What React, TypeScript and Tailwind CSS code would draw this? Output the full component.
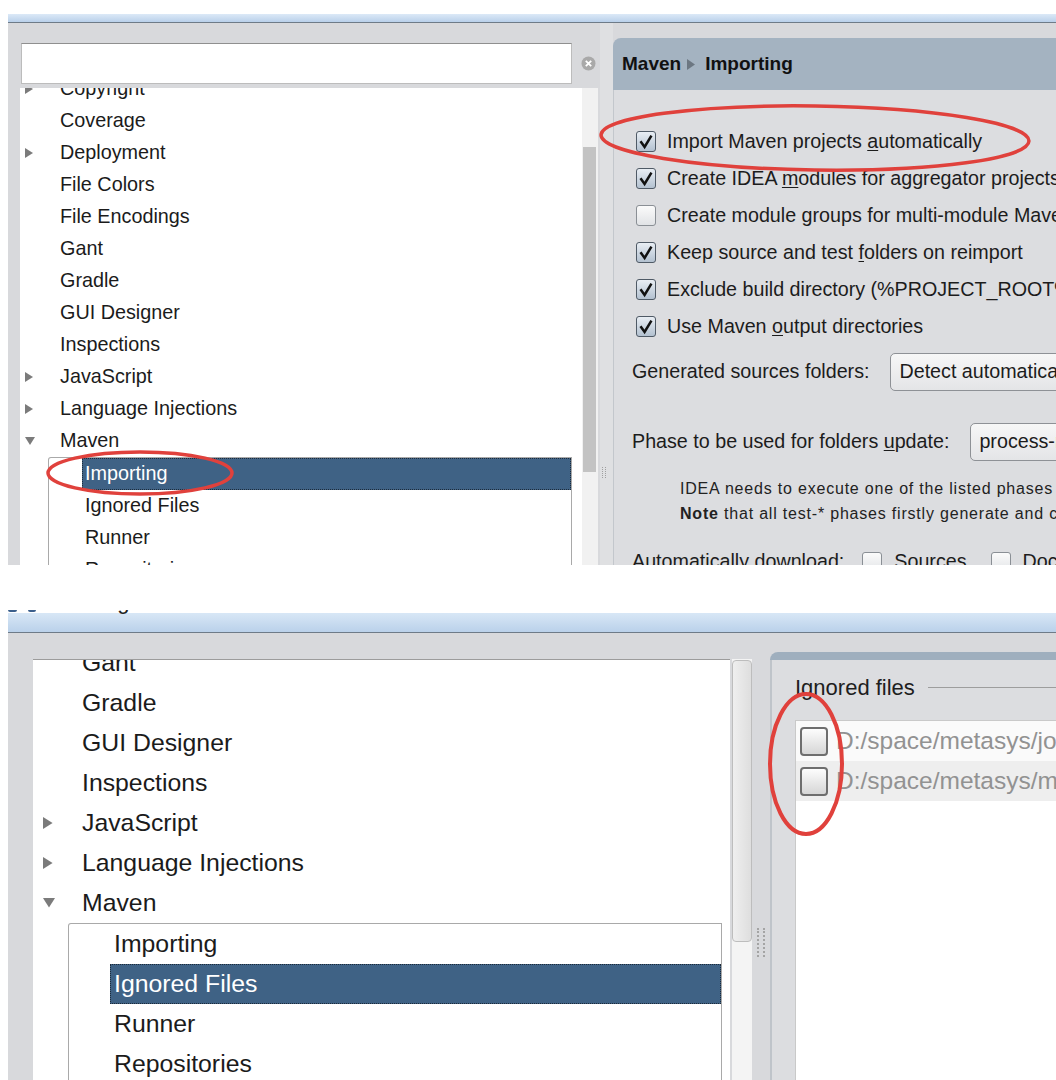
import React from "react";

function ArrowRight({ s = 1 }: { s?: number }) {
  return (
    <svg width={8 * s} height={10 * s} viewBox="0 0 8 10">
      <path d="M0 0 L8 5 L0 10 Z" fill="#7b7b7b" />
    </svg>
  );
}
function ArrowDown({ s = 1 }: { s?: number }) {
  return (
    <svg width={10 * s} height={8 * s} viewBox="0 0 10 8">
      <path d="M0 0 H10 L5 8 Z" fill="#7b7b7b" />
    </svg>
  );
}

function ClearIcon() {
  return (
    <svg width="15" height="15" viewBox="0 0 15 15">
      <circle cx="7.5" cy="7.5" r="7" fill="#a9a9a9" />
      <path d="M4.8 4.8 L10.2 10.2 M10.2 4.8 L4.8 10.2" stroke="#fff" strokeWidth="1.8" />
    </svg>
  );
}

function Check({ checked }: { checked: boolean }) {
  return checked ? (
    <div className="w-[20px] h-[21px] shrink-0 rounded-[3px] border border-[#4f5a66] bg-gradient-to-b from-[#e9eef4] to-[#b3c1d0] flex items-center justify-center">
      <svg width="16" height="16" viewBox="0 0 16 16">
        <path d="M3.2 8.2 L6.6 13 L12.8 2.6" fill="none" stroke="#111" strokeWidth="2.5" strokeLinecap="square" />
      </svg>
    </div>
  ) : (
    <div className="w-[20px] h-[21px] shrink-0 rounded-[3px] border border-[#8a8f95] bg-gradient-to-b from-[#fbfbfb] to-[#e1e3e6]" />
  );
}

function BigBox() {
  return (
    <div className="w-[28px] h-[29px] shrink-0 rounded-[4px] border-2 border-[#6e6e6e] bg-gradient-to-b from-[#fdfdfd] to-[#d6d6d6]" />
  );
}

type Item = { label: string; arrow?: "r" | "d" };

const topItems: Item[] = [
  { label: "Copyright", arrow: "r" },
  { label: "Coverage" },
  { label: "Deployment", arrow: "r" },
  { label: "File Colors" },
  { label: "File Encodings" },
  { label: "Gant" },
  { label: "Gradle" },
  { label: "GUI Designer" },
  { label: "Inspections" },
  { label: "JavaScript", arrow: "r" },
  { label: "Language Injections", arrow: "r" },
  { label: "Maven", arrow: "d" },
];

const bottomItems: Item[] = [
  { label: "Gant" },
  { label: "Gradle" },
  { label: "GUI Designer" },
  { label: "Inspections" },
  { label: "JavaScript", arrow: "r" },
  { label: "Language Injections", arrow: "r" },
  { label: "Maven", arrow: "d" },
];

const children = ["Importing", "Ignored Files", "Runner", "Repositories"];

function TopShot() {
  const rows: { label: React.ReactNode; checked: boolean }[] = [
    { label: <>Import Maven projects <u className="underline-offset-2">a</u>utomatically</>, checked: true },
    { label: <>Create IDEA <u className="underline-offset-2">m</u>odules for aggregator projects (with 'pom' packaging)</>, checked: true },
    { label: <>Create module <u className="underline-offset-2">g</u>roups for multi-module Maven projects</>, checked: false },
    { label: <>Keep source and test <u className="underline-offset-2">f</u>olders on reimport</>, checked: true },
    { label: <>Exclude build directory (%PROJECT_ROOT%/target)</>, checked: true },
    { label: <>Use Maven <u className="underline-offset-2">o</u>utput directories</>, checked: true },
  ];
  return (
    <div className="h-[565px] flex flex-col overflow-hidden">
      <div className="h-[14px] shrink-0" />
      <div className="ml-[8px] h-[8px] shrink-0 bg-gradient-to-b from-[#dce9f7] to-[#b9d0ea]" />
      <div className="ml-[8px] h-[1px] shrink-0 bg-[#6e7b88]" />
      <div className="ml-[8px] flex-1 flex min-h-0 bg-[#d8d9dc]">
        {/* left column */}
        <div className="w-[592px] shrink-0 flex flex-col pl-[12px] pt-[20px] min-h-0">
          <div className="flex items-center h-[41px] shrink-0">
            <div className="ml-[1px] w-[551px] h-[41px] bg-white border border-[#bcbcbc] border-t-[#8f8f8f]" />
            <div className="ml-[9px] flex">
              <ClearIcon />
            </div>
          </div>
          <div className="mt-[4px] flex flex-1 min-h-0">
            <div className="w-[562px] bg-white overflow-hidden">
              <div className="mt-[-15px] text-[19.8px] text-[#1b1b1b]">
                {topItems.map((it) => (
                  <div key={it.label} className="h-[32px] flex items-center whitespace-nowrap">
                    <div className="w-[40px] pl-[5px] flex items-center">
                      {it.arrow === "r" && <ArrowRight />}
                      {it.arrow === "d" && <ArrowDown />}
                    </div>
                    <span>{it.label}</span>
                  </div>
                ))}
                <div className="ml-[28px] mr-[10px] border-l border-t border-r border-[#a9a9a9] rounded-tl-[3px]">
                  {children.map((c, i) => (
                    <div
                      key={c}
                      className={
                        i === 0
                          ? "h-[32px] ml-[33px] flex items-center pl-[2px] bg-[#3f6285] border border-dotted border-[#1d2b3a] text-white"
                          : "h-[32px] ml-[33px] flex items-center pl-[3px]"
                      }
                    >
                      {c}
                    </div>
                  ))}
                </div>
              </div>
            </div>
            <div className="w-[16px] bg-[#f1f1f1] pt-[59px]">
              <div className="ml-[1px] w-[13px] h-[325px] bg-[#c3c3c3]" />
            </div>
          </div>
        </div>
        {/* splitter */}
        <div className="w-[13px] shrink-0 bg-[#dfe0e2] pt-[444px] pl-[2px]">
          <div className="w-[4px] h-[11px] border-l border-r border-dotted border-[#a0a0a0]" />
        </div>
        {/* right panel */}
        <div className="flex-1 min-w-0 pt-[15px] flex flex-col">
          <div className="h-[52px] shrink-0 rounded-tl-[8px] bg-[#a4b3c1] flex items-center pl-[9px] font-bold text-[19px] text-[#111] whitespace-nowrap">
            <span>Maven</span>
            <span className="mx-[6px] flex items-center">
              <svg width="8" height="11" viewBox="0 0 8 11">
                <path d="M0 0 L8 5.5 L0 11 Z" fill="#6c7782" />
              </svg>
            </span>
            <span className="ml-[4px]">Importing</span>
          </div>
          <div className="flex-1 bg-[#dcdde0] border-l border-[#c3c7cc] pt-[33px] whitespace-nowrap text-[19.7px] text-[#1c1c1c] overflow-hidden">
            {rows.map((r, i) => (
              <div key={i} className="h-[37px] flex items-center pl-[22px]">
                <Check checked={r.checked} />
                <span className="ml-[11px]">{r.label}</span>
              </div>
            ))}
            <div className="mt-[7px] h-[40px] flex items-center pl-[18px]">
              <span>Generated sources folders:</span>
              <div className="ml-[21px] h-[38px] rounded-[5px] border border-[#8e9196] bg-gradient-to-b from-[#f7f7f7] to-[#e4e5e7] flex items-center px-[8px]">
                Detect automatically
              </div>
            </div>
            <div className="mt-[30px] h-[40px] flex items-center pl-[18px]">
              <span>
                Phase to be used for folders <u className="underline-offset-2">u</u>pdate:
              </span>
              <div className="ml-[21px] h-[38px] rounded-[5px] border border-[#8e9196] bg-gradient-to-b from-[#f7f7f7] to-[#e4e5e7] flex items-center px-[8px]">
                process-resources
              </div>
            </div>
            <div className="mt-[14px] pl-[66px] text-[16px] tracking-[0.8px] leading-[25px] text-[#222]">
              <div>IDEA needs to execute one of the listed phases in order to discover all source folders that are configured via Maven plugins.</div>
              <div>
                <b>Note</b> that all test-* phases firstly generate and compile main sources.
              </div>
            </div>
            <div className="mt-[16px] h-[40px] flex items-center pl-[18px]">
              <span>Automatically download:</span>
              <span className="ml-[18px] flex items-center">
                <Check checked={false} />
              </span>
              <span className="ml-[12px]">Sources</span>
              <span className="ml-[24px] flex items-center">
                <Check checked={false} />
              </span>
              <span className="ml-[12px]">Documentation</span>
            </div>
          </div>
        </div>
      </div>
    </div>
  );
}

function BottomShot() {
  return (
    <div className="relative h-[470px] flex flex-col overflow-hidden">
      <div className="h-[3px] shrink-0" />
      <div className="ml-[8px] h-[19px] shrink-0 bg-gradient-to-b from-[#d8e7f6] to-[#bad1ea]" />
      <div className="ml-[8px] h-[1px] shrink-0 bg-[#6e7b88]" />
      <div className="ml-[8px] flex-1 flex min-h-0 bg-[#d8d9dc]">
        {/* left */}
        <div className="w-[744px] shrink-0 flex pl-[25px] pt-[26px] min-h-0">
          <div className="w-[697px] bg-white border-t border-[#9c9c9c] overflow-hidden">
            <div className="mt-[-17px] text-[24.8px] text-[#1b1b1b]">
              {bottomItems.map((it) => (
                <div key={it.label} className="h-[40px] flex items-center whitespace-nowrap">
                  <div className="w-[49px] pl-[10px] flex items-center">
                    {it.arrow === "r" && <ArrowRight s={1.2} />}
                    {it.arrow === "d" && <ArrowDown s={1.2} />}
                  </div>
                  <span>{it.label}</span>
                </div>
              ))}
              <div className="ml-[35px] mr-[8px] border-l border-t border-r border-[#a9a9a9] rounded-tl-[3px]">
                {children.map((c, i) => (
                  <div
                    key={c}
                    className={
                      i === 1
                        ? "h-[40px] ml-[41px] flex items-center pl-[3px] bg-[#3f6285] border border-dotted border-[#1d2b3a] text-white"
                        : "h-[40px] ml-[41px] flex items-center pl-[4px]"
                    }
                  >
                    {c}
                  </div>
                ))}
              </div>
            </div>
          </div>
          <div className="ml-[2px] w-[20px] bg-[#f4f4f4] pt-[1px]">
            <div className="w-[20px] h-[282px] rounded-[4px] border border-[#bdbdbd] bg-gradient-to-r from-[#efefef] to-[#dedede]" />
          </div>
        </div>
        {/* splitter */}
        <div className="w-[18px] shrink-0 pt-[295px] pl-[5px]">
          <div className="w-[8px] h-[29px] border-l-2 border-r-2 border-dotted border-[#a4a4a4]" />
        </div>
        {/* right */}
        <div className="flex-1 min-w-0 pt-[19px] flex flex-col">
          <div className="h-[8px] shrink-0 rounded-tl-[10px] bg-[#9fafbe]" />
          <div className="flex-1 bg-[#dcdde0] border-l-2 border-[#bfc4ca] flex flex-col">
            <div className="mt-[13px] h-[28px] flex items-center pl-[23px] whitespace-nowrap">
              <span className="text-[22px] text-[#1e1e1e]">Ignored files</span>
              <div className="ml-[13px] flex-1 h-[1px] bg-[#9d9d9d]" />
            </div>
            <div className="mt-[19px] ml-[23px] flex-1 bg-white border-l border-t border-[#c9c9c9] whitespace-nowrap text-[24.5px] text-[#929292] overflow-hidden">
              <div className="h-[40px] flex items-center pl-[4px] bg-[#fafafa]">
                <BigBox />
                <span className="ml-[8px]">D:/space/metasys/jobs-core/pom.xml</span>
              </div>
              <div className="h-[40px] flex items-center pl-[4px] bg-[#eeeeee]">
                <BigBox />
                <span className="ml-[8px]">D:/space/metasys/metasys-web/pom.xml</span>
              </div>
            </div>
          </div>
        </div>
      </div>
      {/* clipped title text fragments */}
      <div className="absolute left-[8px] top-0 w-[200px] h-[8px] overflow-hidden">
        <div className="mt-[-3px] flex">
          <svg width="30" height="8" viewBox="0 0 30 8">
            <rect x="0" y="0" width="9" height="5" rx="2" fill="#3b5f8c" />
            <rect x="20" y="0" width="8" height="5" rx="2" fill="#3b5f8c" />
          </svg>
        </div>
      </div>
      <div className="absolute left-[61px] top-0 h-[8px] overflow-hidden">
        <div className="mt-[-19px] text-[22px] leading-[22px] text-[#222] whitespace-nowrap">Settings</div>
      </div>
    </div>
  );
}

function Annotations() {
  return (
    <svg className="absolute left-0 top-0 pointer-events-none" width="1056" height="1080" viewBox="0 0 1056 1080">
      <ellipse cx="815" cy="138" rx="214" ry="32" fill="none" stroke="#e0413c" strokeWidth="3.5" transform="rotate(0.8 815 138)" />
      <ellipse cx="140" cy="473" rx="92" ry="21" fill="none" stroke="#e0413c" strokeWidth="3.5" />
      <ellipse cx="806" cy="764" rx="36" ry="70" fill="none" stroke="#e0413c" strokeWidth="4" />
    </svg>
  );
}

export default function App() {
  return (
    <div className="relative w-[1056px] h-[1080px] overflow-hidden bg-white font-['Liberation_Sans',Arial,sans-serif]">
      <TopShot />
      <div className="h-[45px]" />
      <BottomShot />
      <Annotations />
    </div>
  );
}
